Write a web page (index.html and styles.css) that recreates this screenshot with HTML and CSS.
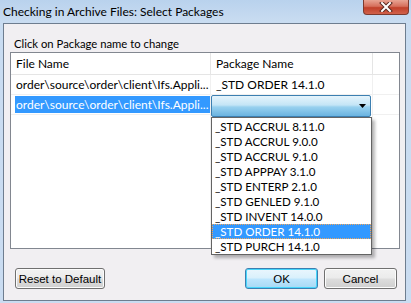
FILE: index.html
```html
<!DOCTYPE html>
<html lang="en">
<head>
  <meta charset="UTF-8">
  <title>Checking in Archive Files: Select Packages</title>
  <link rel="stylesheet" href="styles.css">
</head>
<body>
  <div class="window">
    <div class="titlebar">
      <div class="caption">Checking in Archive Files: Select Packages</div>
      <div class="close-btn">
        <svg width="14" height="10" viewBox="0 0 14 10">
          <path d="M3 1 L11 9 M11 1 L3 9" stroke="#5a2a22" stroke-width="4" stroke-linecap="square"/>
          <path d="M3 1 L11 9 M11 1 L3 9" stroke="#ffffff" stroke-width="2" stroke-linecap="square"/>
        </svg>
      </div>
    </div>

    <div class="client">
      <div class="hint">Click on Package name to change</div>

      <div class="listview">
        <div class="row header">
          <div class="cell c1">File Name</div>
          <div class="cell c2">Package Name</div>
          <div class="cell c3"></div>
        </div>
        <div class="row">
          <div class="cell c1">order\source\order\client\Ifs.Appli...</div>
          <div class="cell c2">_STD ORDER 14.1.0</div>
          <div class="cell c3"></div>
        </div>
        <div class="row">
          <div class="cell c1"><span class="selected">order\source\order\client\Ifs.Appli...</span></div>
          <div class="cell c2"></div>
          <div class="cell c3"></div>
        </div>
        <div class="row filler">
          <div class="cell c1"></div>
          <div class="cell c2"></div>
          <div class="cell c3"></div>
        </div>

        <div class="combo">
          <svg class="arrow" width="7" height="4" viewBox="0 0 7 4">
            <path d="M0 0 H7 L3.5 4 Z" fill="#000"/>
          </svg>
        </div>

        <div class="dropdown">
          <div class="option">_STD ACCRUL 8.11.0</div>
          <div class="option">_STD ACCRUL 9.0.0</div>
          <div class="option">_STD ACCRUL 9.1.0</div>
          <div class="option">_STD APPPAY 3.1.0</div>
          <div class="option">_STD ENTERP 2.1.0</div>
          <div class="option">_STD GENLED 9.1.0</div>
          <div class="option">_STD INVENT 14.0.0</div>
          <div class="option active">_STD ORDER 14.1.0</div>
          <div class="option">_STD PURCH 14.1.0</div>
        </div>
      </div>

      <div class="buttons">
        <div class="btn reset">Reset to Default</div>
        <div class="spacer"></div>
        <div class="btn default">OK</div>
        <div class="btn">Cancel</div>
      </div>
    </div>
  </div>
</body>
</html>
```

FILE: styles.css
```css
* { box-sizing: border-box; }

body {
  margin: 0;
  padding: 0;
  background: #c8dcf1;
  font-family: Lato, "Open Sans", sans-serif;
  font-size: 12px;
  color: #000;
  overflow: hidden;
}

.window {
  width: 411px;
  height: 303px;
  display: flex;
  flex-direction: column;
  background: linear-gradient(to bottom, #b9d2ed 0px, #c9dcf1 22px, #cadcf1 100%);
}

.titlebar {
  height: 23px;
  display: flex;
  align-items: flex-start;
}

.caption {
  padding: 4px 0 0 3px;
  font-size: 12px;
  line-height: 16px;
  color: #000;
}

.close-btn {
  margin-left: auto;
  margin-right: 2px;
  width: 46px;
  height: 15px;
  display: flex;
  align-items: center;
  justify-content: center;
  border: 1px solid #7d3a2e;
  border-top: none;
  border-radius: 0 0 4px 4px;
  background: linear-gradient(to bottom, #e8a493 0%, #d66f5c 45%, #c1402a 55%, #d0614b 100%);
}

.client {
  flex: 1;
  margin: 0 5px 2px 3px;
  border: 1px solid #6e7d8f;
  background: #f1eff2;
  display: flex;
  flex-direction: column;
}

.hint {
  padding: 12px 0 0 10px;
  height: 28px;
  line-height: 15px;
  font-size: 11.3px;
}

.listview {
  position: relative;
  margin: 0 5px 0 6px;
  height: 197px;
  border: 1px solid #828790;
  background: #fff;
  display: flex;
  flex-direction: column;
}

.row {
  display: flex;
  height: 20px;
  border-bottom: 1px solid #f0f0f0;
}

.row.header {
  height: 22px;
  border-bottom: 1px solid #e5e5e5;
}

.row.filler {
  flex: 1;
  border-bottom: none;
}

.cell {
  display: flex;
  align-items: center;
  white-space: nowrap;
  overflow: hidden;
  border-right: 1px solid #f0f0f0;
}

.header .cell {
  border-right: 1px solid #e5e5e5;
  padding-left: 5px;
}

.c1 { width: 200px; padding-left: 5px; }
.c2 { width: 162px; padding-left: 5px; }
.c3 { flex: 1; border-right: none; }

.header .c3 { border-right: none; }

.selected {
  margin-left: -1px;
  padding: 0 0 0 1px;
  height: 17px;
  line-height: 17px;
  width: 196px;
  background: #3399ff;
  color: #fff;
}

.combo {
  position: absolute;
  left: 200px;
  top: 42px;
  width: 160px;
  height: 22px;
  border: 1px solid #3c7fb1;
  border-radius: 2px;
  background: linear-gradient(to bottom, #e5f4fc 0%, #c4e5f6 45%, #98d1ef 55%, #6ab3e0 100%);
  display: flex;
  align-items: center;
  justify-content: flex-end;
  padding-right: 4px;
}

.dropdown {
  position: absolute;
  left: 200px;
  top: 64px;
  width: 161px;
  height: 138px;
  border: 1px solid #646464;
  background: #fff;
  box-shadow: 3px 3px 3px rgba(0, 0, 0, 0.28);
  padding-top: 1px;
  z-index: 2;
}

.option {
  height: 15px;
  line-height: 15px;
  padding-left: 3px;
  font-size: 11.6px;
  white-space: nowrap;
}

.option.active {
  background: #3399ff;
  color: #fff;
  outline: 1px dotted #f2a65a;
  outline-offset: -1px;
}

.buttons {
  display: flex;
  gap: 6px;
  padding: 19px 8px 0 11px;
}

.spacer { flex: 1; }

.btn {
  width: 73px;
  height: 21px;
  border: 1px solid #707070;
  border-radius: 3px;
  background: linear-gradient(to bottom, #f2f2f2 0%, #ebebeb 48%, #dddddd 52%, #cfcfcf 100%);
  font-family: "Liberation Sans", Arial, sans-serif;
  font-size: 11.5px;
  display: flex;
  align-items: center;
  justify-content: center;
  box-shadow: inset 0 0 0 1px #fcfcfc;
}

.btn.reset { width: 90px; }

.btn.default {
  border-color: #3c7fb1;
  box-shadow: inset 0 0 0 1px #48d6fb;
  background: linear-gradient(to bottom, #eaf6fd 0%, #d9f0fc 48%, #bee6fd 52%, #a7d9f5 100%);
}
```
